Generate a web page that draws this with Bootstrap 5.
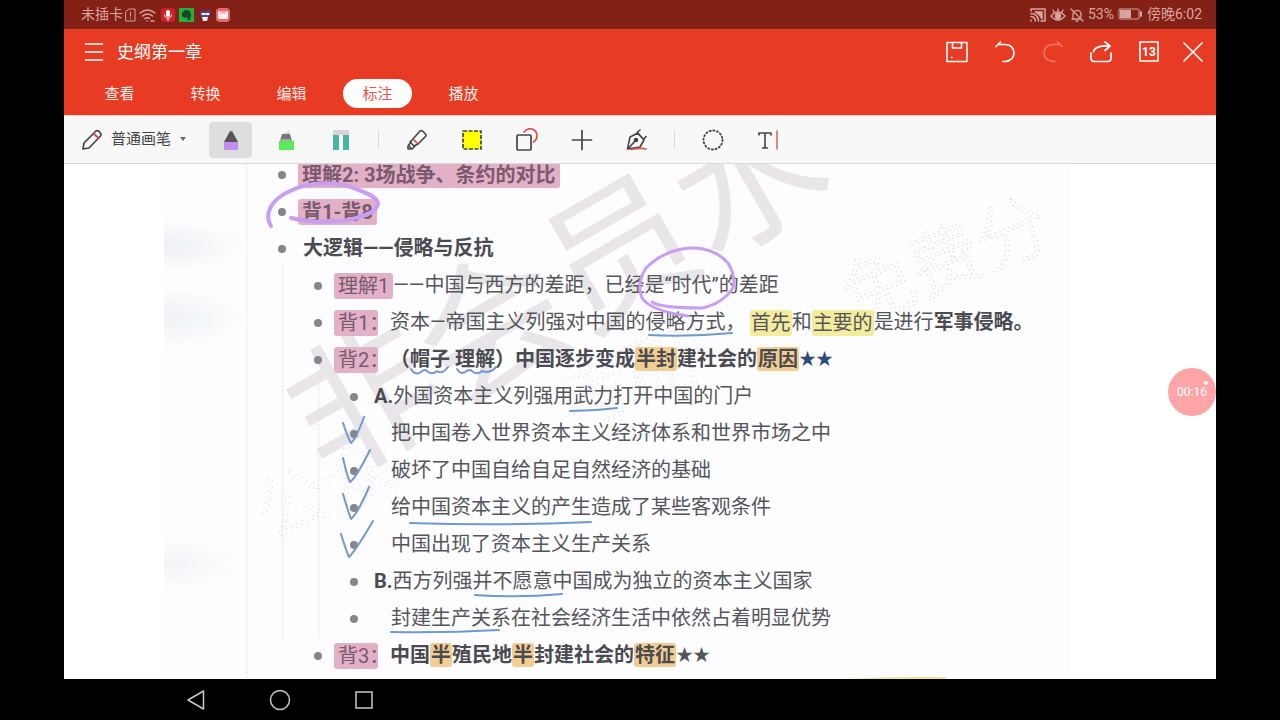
<!DOCTYPE html>
<html lang="zh-CN">
<head>
<meta charset="utf-8">
<meta name="viewport" content="width=device-width, initial-scale=1">
<title>史纲第一章</title>
<link rel="stylesheet" href="https://cdn.jsdelivr.net/npm/bootstrap@5.3.0/dist/css/bootstrap.min.css">
<style>
  body { background: #000; font-family: Roboto, "Noto Sans CJK SC", sans-serif; padding: 0 5%; }
  svg { display: block; fill: none; stroke-linecap: round; stroke-linejoin: round; }
  button { border: 0; background: none; padding: 0; color: inherit; }

  .status-bar { background: #842117; color: #d9a49d; height: 29px; font-size: 14px; line-height: 29px; padding: 0 14px 0 17px; }
  .app-header { background: #e73c23; color: #fff; height: 86px; }
  .title-row { height: 45px; padding: 0 3px 0 20px; }
  .doc-title { font-size: 17px; line-height: 24px; font-weight: 400; margin: 0 0 0 13px; }
  .action { width: 48px; height: 40px; }
  .action-close { width: 40px; }
  .tabs { gap: 17px; padding: 5px 0 0 21px; }
  .tabs .nav-link { width: 69px; height: 29px; padding: 0; border-radius: 15px; color: #ffece8; font-size: 15px; line-height: 30px; text-align: center; }
  .tabs .nav-link.active { background: #fff; color: #e0574a; }

  .tool-row { background: #f8f8f8; height: 49px; border-top: 1px solid #ffd3cb; border-bottom: 1px solid #d9d9d9; color: #444; }
  .brush { width: 139px; padding-left: 17px; font-size: 15px; }
  .tool { width: 43px; height: 36px; margin: 0 6px; border-radius: 4px; }
  .tool.active { background: #dedede; }
  .split { width: 1px; height: 19px; margin: 0 10px; background: #dcdcdc; }

  .viewer { background: #fff; min-height: 0; }
  .scan { margin: 0 145px 0 100px; height: 100%; background:
      radial-gradient(ellipse 80px 26px at 0 82px, #eff0f5, transparent),
      radial-gradient(ellipse 80px 30px at 0 154px, #eff1f5, transparent),
      radial-gradient(ellipse 70px 26px at 0 400px, #f3f3f7, transparent),
      #fdfcfe; }
  .layer { left: 0; top: 0; }
  .notes { top: 0; left: 100px; padding-left: 114px; margin-top: -8px; color: #55565b; font-size: 20px; line-height: 37px; white-space: nowrap; }
  .notes ul { padding-left: 36px; list-style: none; }
  .line { display: flex; align-items: center; height: 37px; white-space: pre; }
  .line::before { content: ""; flex: none; width: 8px; height: 8px; margin-right: 17px; border-radius: 50%; background: #85858c; }
  .notes ul ul .line::before { margin-right: 33px; }
  .notes ul ul .lettered::before { margin-right: 16px; }
  .strong { font-weight: 700; color: #4a4b50; }
  .hl { line-height: 26px; border-radius: 3px; padding: 0 2px; }
  .pink { background: #e2b0c7; color: #7a5a6b; padding: 0 4px; margin-left: -5px; }
  .tag { width: 44px; margin-right: 12px; padding-right: 0; }
  .yellow { background: #f4ec9d; padding: 0 1px; }
  .orange { background: #f4cd93; padding: 0 1px; }
  .stars { font-size: 17px; }
  .stars-blue { color: #2f4a77; }

  .timer { right: 0; top: 204px; width: 48px; height: 48px; border-radius: 50%; background: #ffa5a8; color: #fff; font-size: 12px; }
  .timer i { right: 8px; top: 13px; width: 4px; height: 4px; border-radius: 50%; background: #fff; }

  .system-nav { height: 41px; padding-left: 90px; }
  .system-nav button { width: 84px; }
</style>
</head>
<body class="d-flex flex-column vh-100 overflow-hidden">

<div class="status-bar d-flex justify-content-between">
  <div class="d-flex align-items-center">
    <span>未插卡</span>
    <svg width="15" height="16" viewBox="0 0 15 16" stroke="#d9a49d"><path d="M3 4.500l3-2.500h6v12H3z M7.500 5v4 M7.500 11v.5"/></svg>
    <svg width="19" height="16" viewBox="0 0 19 16" stroke="#d9a49d" stroke-width="1.500"><path d="M2 6Q9.500 0 17 6M4.500 9Q9.500 5 14.500 9M7 11.500Q9.500 10 11.500 11.500"/><path d="M9 14h.1M13 14h3"/></svg>
    <svg class="ms-1" width="14" height="14" viewBox="0 0 14 14"><rect width="14" height="14" rx="3" fill="#cf2029"/><rect x="5" y="2" width="4" height="7" rx="2" fill="#fff"/><path d="M3.500 7c0 4.500 7 4.500 7 0M7 10.500v2" stroke="#fff"/></svg>
    <svg class="ms-1" width="15" height="14" viewBox="0 0 15 14"><path fill="#20b03b" d="M0 0h15v14H0z"/><path fill="#174526" d="M3 5l3-3 5 1 1 4-1 5H8l1-3-3 1-3-2z"/></svg>
    <svg class="ms-1" width="14" height="14" viewBox="0 0 14 14"><path fill="#4548a8" d="M2 3l3 1 4-1 3-1v5l-2 2H4L2 7z"/><path d="M4.500 6h2M8.500 6h2" stroke="#fff" stroke-width="2"/><path fill="#eee" d="M4 9h6l-1 4H5z"/></svg>
    <svg class="ms-1" width="14" height="14" viewBox="0 0 14 14"><rect width="14" height="14" rx="4" fill="#e8696b"/><rect x="2" y="3" width="10" height="8" rx="1" fill="#ffe9e9"/><path d="M5 3v2M7 3v2M9 3v2" stroke="#e8696b"/></svg>
  </div>
  <div class="d-flex align-items-center">
    <svg width="16" height="14" viewBox="0 0 16 14" stroke="#d9a49d" stroke-width="1.500"><path d="M1 3V1h14v12h-4M1 5.500Q8 6 8.500 13M1 8.500Q5 9 5.500 13M1 12v1"/><path d="M5 4h7v7Q10 6 5 4z" fill="#d9a49d"/></svg>
    <svg class="ms-1" width="16" height="14" viewBox="0 0 16 14" stroke="#d9a49d" stroke-width="1.300"><path d="M1 8Q8 0 15 8Q8 16 1 8zM8 1v3M3 2l1.500 3M13 2l-1.500 3"/><circle cx="8" cy="8" r="2.500" fill="#d9a49d"/></svg>
    <svg class="ms-1" width="14" height="14" viewBox="0 0 14 14" stroke="#d9a49d" stroke-width="1.300"><path d="M2 11h9M3 10V6q0-1 1-2M5 3q5-2 6 3v3M6 13h2M1 1l12 12"/></svg>
    <span class="ms-1">53%</span>
    <svg class="mx-1" width="25" height="13" viewBox="0 0 25 13"><rect x="1" y="1" width="20" height="10" rx="1" stroke="#d9a49d"/><path fill="#d9a49d" d="M2 2h11v8H2z"/><path d="M23 4v4" stroke="#d9a49d" stroke-width="2"/></svg>
    <span>傍晚6:02</span>
  </div>
</div>

<header class="app-header">
  <div class="title-row d-flex align-items-center">
    <button aria-label="菜单"><svg width="20" height="20" viewBox="0 0 20 20" stroke="#fff" stroke-width="1.600"><path d="M1.500 2h17M1.500 10h17M1.500 18h17"/></svg></button>
    <h1 class="doc-title me-auto">史纲第一章</h1>
    <button class="action d-flex align-items-center justify-content-center" aria-label="保存"><svg width="22" height="22" viewBox="0 0 22 22" stroke="#fff" stroke-width="1.600"><path d="M1 1.500h20v19H1zM6.500 2v5h9V2M5.500 16.500h.5"/></svg></button>
    <button class="action d-flex align-items-center justify-content-center" aria-label="撤销"><svg width="22" height="22" viewBox="0 0 22 22" stroke="#fff" stroke-width="1.700"><path d="M6.500 1L2 5.500M2 5.500l2-2H11c12 0 12 16.500 0 17H9"/></svg></button>
    <button class="action d-flex align-items-center justify-content-center" aria-label="重做" disabled><svg width="22" height="22" viewBox="0 0 22 22" stroke="#f47c69" stroke-width="1.500"><path d="M15.500 1L20 5.500l-2-2h-7c-12 0-12 16.500 0 17h2"/></svg></button>
    <button class="action d-flex align-items-center justify-content-center" aria-label="分享"><svg width="22" height="22" viewBox="0 0 22 22" stroke="#fff" stroke-width="1.700"><path d="M15 1l5 4-5 4.500M19.500 5C10 4 4 7 3.500 11M1 12v5q0 3.500 3.500 3.500h13q3.500 0 3.500-3.500v-5"/></svg></button>
    <button class="action d-flex align-items-center justify-content-center" aria-label="页面 13"><svg width="22" height="22" viewBox="0 0 22 22"><rect x="2" y="1" width="18" height="19" stroke="#fff" stroke-width="1.600"/><text x="11" y="15" fill="#fff" font-size="12" font-weight="700" text-anchor="middle">13</text></svg></button>
    <button class="action action-close d-flex align-items-center justify-content-center" aria-label="关闭"><svg width="22" height="22" viewBox="0 0 22 22" stroke="#fff" stroke-width="1.700"><path d="M2 2l18 18M20 2L2 20"/></svg></button>
  </div>
  <nav class="tabs d-flex">
    <a class="nav-link" href="#">查看</a>
    <a class="nav-link" href="#">转换</a>
    <a class="nav-link" href="#">编辑</a>
    <a class="nav-link active" href="#" aria-current="page">标注</a>
    <a class="nav-link" href="#">播放</a>
  </nav>
</header>

<div class="tool-row d-flex align-items-center flex-shrink-0">
  <button class="brush d-flex align-items-center">
    <svg width="22" height="22" viewBox="0 0 22 22" stroke="#444" stroke-width="1.700"><path d="M2 20l1-6L15 2q1.500-1 3 .5l1.500 1.500q1 1.500 0 3L8 19z"/><path d="M13 5l4.500 4" stroke="#d9413c"/></svg>
    <span class="ms-2">普通画笔</span>
    <svg class="ms-2" width="8" height="5" viewBox="0 0 8 5"><path fill="#666" d="M1 0h6L4 4z"/></svg>
  </button>
  <button class="tool active d-flex align-items-center justify-content-center" aria-label="画笔"><svg width="18" height="22" viewBox="0 0 18 22"><path fill="#555" d="M2 13L8 2h2l6 11z"/><path fill="#999" d="M8 3l1-2 1 2z"/><path fill="#c08ff0" d="M2 13h14v8H2z"/></svg></button>
  <button class="tool d-flex align-items-center justify-content-center" aria-label="荧光笔"><svg width="18" height="22" viewBox="0 0 18 22"><path fill="#ddd" d="M5 5l8-4v5H5z"/><path fill="#777" d="M5 5h8l2 7H3z"/><path fill="#aaa" d="M3 10h12v2H3z"/><path fill="#57ec57" d="M2 12h15v9H2z"/></svg></button>
  <button class="tool d-flex align-items-center justify-content-center" aria-label="直线笔"><svg width="18" height="22" viewBox="0 0 18 22"><path fill="#d6d6d6" d="M1 1h16v5H1z"/><path fill="#49b6a1" d="M1 6h6v15H1zM11 6h6v15h-6z"/><path fill="#fff" d="M7 6h4v15H7z"/></svg></button>
  <span class="split"></span>
  <button class="tool d-flex align-items-center justify-content-center" aria-label="橡皮"><svg width="22" height="22" viewBox="0 0 22 22" stroke="#444" stroke-width="1.600"><path d="M7 10l7-8q1-1 2.500 0l3 3q1 1 0 2.500L12 15l-4 2-4-4zM5 13l-3 4v3h4l3-3"/><path d="M3 17l2 2"/><path d="M8 11l4 4" stroke="#d9413c"/></svg></button>
  <button class="tool d-flex align-items-center justify-content-center" aria-label="区域高亮"><svg width="22" height="22" viewBox="0 0 22 22"><path d="M2 2h18v18H2z" fill="#ff0" stroke="#444" stroke-width="1.700" stroke-dasharray="4 1.500" stroke-linecap="butt"/></svg></button>
  <button class="tool d-flex align-items-center justify-content-center" aria-label="形状"><svg width="24" height="24" viewBox="0 0 24 24" stroke-width="1.700"><path d="M9 4c5-6 13-3 13 4 0 3-2 5-3.500 6" stroke="#dd544c"/><rect x="2" y="7" width="14" height="15" rx="1" stroke="#444"/></svg></button>
  <button class="tool d-flex align-items-center justify-content-center" aria-label="添加"><svg width="22" height="22" viewBox="0 0 22 22" stroke="#444" stroke-width="1.700"><path d="M11 1.500v19M1.500 11h19"/></svg></button>
  <button class="tool d-flex align-items-center justify-content-center" aria-label="签名"><svg width="22" height="22" viewBox="0 0 22 22" stroke="#444" stroke-width="1.600"><path d="M1.500 20L4 8l8-4 6 7-4 7zM2 20l7-8M11 3.500l3-2.500M11.500 4l6 6.500 2.500-3"/><circle cx="10" cy="11" r="1.500" fill="#444"/><path d="M5 20.500q10-2 15-.5" stroke="#dd544c"/></svg></button>
  <span class="split"></span>
  <button class="tool d-flex align-items-center justify-content-center" aria-label="套索"><svg width="22" height="22" viewBox="0 0 22 22"><circle cx="11" cy="11" r="9.500" stroke="#444" stroke-width="1.800" stroke-dasharray="1.200 2.530"/></svg></button>
  <button class="tool d-flex align-items-center justify-content-center" aria-label="文本"><svg width="22" height="22" viewBox="0 0 22 22" stroke="#444" stroke-width="1.600"><path d="M2 6V4h12v2M8 4v15M5.500 19h5"/><path d="M20 2v18" stroke="#c9504a" stroke-width="1.300"/></svg></button>
</div>

<main class="viewer flex-grow-1 position-relative overflow-hidden">
  <div class="scan"></div>

  <!-- watermarks and fold lines printed under the notes -->
  <svg class="layer position-absolute" width="1152" height="515" viewBox="64 164 1152 515" aria-hidden="true">
    <g font-family="Noto Sans CJK SC" text-anchor="middle">
      <text transform="translate(555 287) rotate(-30)" y="56" font-size="148" font-weight="400" fill="#e8e6e9">非会员水</text>
      <text transform="translate(946 262) rotate(-22)" y="24" font-size="72" font-weight="300" stroke="#dfdde2" stroke-width="1" stroke-dasharray="1 4">免费分</text>
      <text transform="translate(326 490) rotate(-24)" y="24" font-size="72" font-weight="300" stroke="#e6e4e9" stroke-width="1" stroke-dasharray="1 5">公众</text>
      <text transform="translate(630 380) rotate(-24)" y="24" font-size="72" font-weight="300" stroke="#e6e4e9" stroke-width="1" stroke-dasharray="1 5">考研</text>
    </g>
    <path d="M246.500 164V679M282.500 266V640M318.500 372V640" stroke="#dddbe1" stroke-dasharray="1 3"/>
    <path d="M845 679q50-3 101-2v2z" fill="#eee99a"/>
  </svg>

  <ul class="notes list-unstyled position-absolute">
    <li><div class="line strong"><span class="hl pink">理解2: 3场战争、条约的对比</span></div></li>
    <li><div class="line strong"><span class="hl pink">背1-背8</span></div></li>
    <li>
      <div class="line strong">大逻辑——侵略与反抗</div>
      <ul>
        <li><div class="line"><span class="hl pink">理解1</span>——中国与西方的差距，已经是“时代”的差距</div></li>
        <li><div class="line"><span class="hl pink tag">背1：</span>资本—帝国主义列强对中国的侵略方式，<span class="hl yellow ms-1">首先</span>和<span class="hl yellow">主要的</span>是进行<span class="strong">军事侵略。</span></div></li>
        <li>
          <div class="line"><span class="hl pink tag">背2：</span><span class="strong">（帽子 理解）中国逐步变成<span class="hl orange">半封</span>建社会的<span class="hl orange">原因</span></span><span class="stars stars-blue">★★</span></div>
          <ul>
            <li><div class="line lettered"><span class="strong">A.</span>外国资本主义列强用武力打开中国的门户</div></li>
            <li><div class="line">把中国卷入世界资本主义经济体系和世界市场之中</div></li>
            <li><div class="line">破坏了中国自给自足自然经济的基础</div></li>
            <li><div class="line">给中国资本主义的产生造成了某些客观条件</div></li>
            <li><div class="line">中国出现了资本主义生产关系</div></li>
            <li><div class="line lettered"><span class="strong">B.</span>西方列强并不愿意中国成为独立的资本主义国家</div></li>
            <li><div class="line">封建生产关系在社会经济生活中依然占着明显优势</div></li>
          </ul>
        </li>
        <li><div class="line"><span class="hl pink tag">背3：</span><span class="strong">中国<span class="hl orange">半</span>殖民地<span class="hl orange">半</span>封建社会的<span class="hl orange">特征</span></span><span class="stars">★★</span></div></li>
      </ul>
    </li>
  </ul>

  <!-- pen strokes -->
  <svg class="layer position-absolute pe-none" width="1152" height="515" viewBox="64 164 1152 515" aria-hidden="true">
    <g stroke="#7299cd" stroke-width="2">
      <path d="M649 335Q690 337 732 333M570 411Q594 411 617 408M410 523Q500 526 591 522M475 595Q520 598 562 594M391 632Q445 633 499 630"/>
      <path d="M411 369q4 7 10 3 4-4 7 0 5 3 9-1 5 4 11-4M457 369q4 6 8 3 5-4 8 0 5 3 9-1 8 3 14-4"/>
      <path d="M343 423Q348 438 351 443Q356 439 364 417M343 458Q347 476 350 482Q356 478 370 450M343 494Q349 514 351 519Q358 513 369 487M341 534Q347 553 349 557Q356 550 373 521"/>
    </g>
    <g stroke="#c79ef2" stroke-width="4">
      <path d="M271 226C264 215 270 200 290 191C308 182 336 180 356 189C370 194 378 198 378 204C376 213 362 217 348 220C326 223 308 222 291 218"/>
      <path d="M652 302Q660 308 702 308Q722 304 733 288Q736 276 728 263Q714 247 690 248Q664 250 646 268Q636 284 642 298Q651 311 688 316" stroke-width="3"/>
    </g>
  </svg>

  <button class="timer position-absolute">00:16<i class="position-absolute"></i></button>
</main>

<nav class="system-nav d-flex align-items-center flex-shrink-0">
  <button class="d-flex justify-content-center" aria-label="返回"><svg width="22" height="22" viewBox="0 0 22 22" stroke="#c8c8c8" stroke-width="1.500"><path d="M18.500 2v18L3 11z"/></svg></button>
  <button class="d-flex justify-content-center" aria-label="主页"><svg width="22" height="22" viewBox="0 0 22 22" stroke="#c8c8c8" stroke-width="1.500"><circle cx="11" cy="11" r="9.500"/></svg></button>
  <button class="d-flex justify-content-center" aria-label="最近任务"><svg width="22" height="22" viewBox="0 0 22 22" stroke="#c8c8c8" stroke-width="1.500"><path d="M3 3h16v16H3z"/></svg></button>
</nav>
<script src="https://cdn.jsdelivr.net/npm/bootstrap@5.3.0/dist/js/bootstrap.bundle.min.js"></script>
</body>
</html>
